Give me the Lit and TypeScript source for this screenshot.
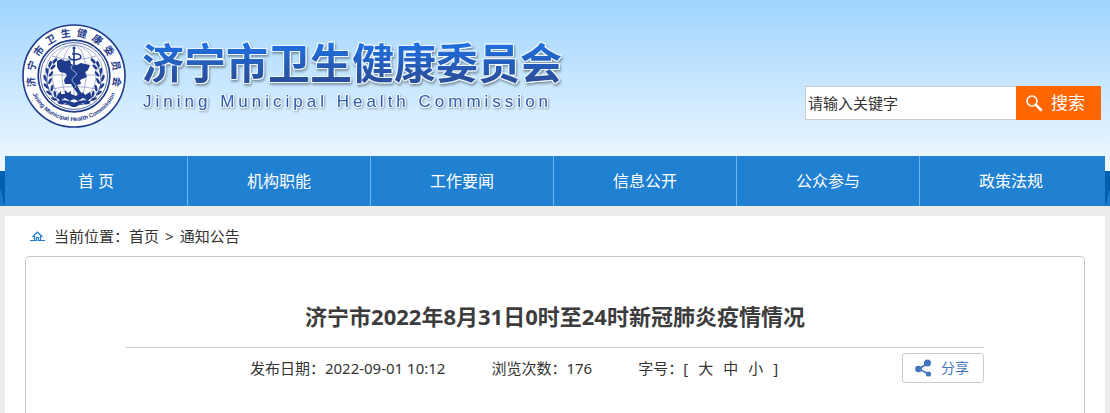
import { LitElement, html, svg, css } from "lit";
import { customElement, property } from "lit/decorators.js";

@customElement("site-emblem")
class SiteEmblem extends LitElement {
  static styles = css`
    :host { display: block; flex: none; }
    svg { display: block; }
    .cn { font: bold 10px "Noto Sans CJK SC", sans-serif; letter-spacing: 5px; }
    .en { font: bold 6px "Liberation Sans", sans-serif; }
  `;

  leaf(x: number, y: number, angle: number) {
    return svg`<ellipse cx=${x} cy=${y} rx="3.3" ry="1.3" transform="rotate(${angle} ${x} ${y})" />`;
  }

  branch() {
    return svg`
      <path d="M-4 29C-18 28-27 18-27 4C-27-5-24-12-19-17" fill="none" stroke="#1f3b8c" stroke-width=".8" />
      ${[[-19, -15, -50], [-24, -12, -70], [-21, -9, -45], [-27, -5, -95], [-23, -2, -55], [-29, 2, -110],
         [-24, 5, -65], [-28, 10, -130], [-22, 12, -80], [-25, 17, -145], [-19, 18, -100], [-20, 23, -160],
         [-14, 23, -120], [-13, 27, 190]].map(([x, y, a]) => this.leaf(x, y, a))}`;
  }

  render() {
    return html`
      <svg width="104" height="104" viewBox="-52 -52 104 104" role="img" aria-label="济宁市卫生健康委员会徽标">
        <defs>
          <path id="upper" d="M-14.5 36.7A39.5 39.5 0 1 1 14.5 36.7" />
          <path id="lower" d="M-45 0A45 45 0 0 0 45 0" />
        </defs>
        <circle r="51" fill="#fff" stroke="#1f3b8c" stroke-width="1.6" />
        <circle r="35.8" fill="none" stroke="#1f3b8c" stroke-width="1.7" />
        <circle r="33.4" fill="none" stroke="#1f3b8c" stroke-width=".8" />
        <g fill="none" stroke="#8493c2" stroke-width=".7">
          <circle r="29" cy="-2" />
          <ellipse rx="12" ry="29" cy="-2" />
          <ellipse rx="22" ry="29" cy="-2" />
          <path d="M-29-1H29M-22-20Q0-13 22-20M-22 13Q0 8 22 13M0-31V24" />
        </g>
        <g fill="#1f3b8c">
          ${this.branch()}
          <g transform="scale(-1 1)">${this.branch()}</g>
          <path d="M-17-15L-13-17L-9-15L-4-16L-3-12L3-11L7-13L11-12L16-11L14-6L11-4L13 1L6 4L7 8L3 9L6 15L9 19L6 22L3 17L-1 11L-3 8L-9 8L-10 4L-7-1L-9-3L-14-4L-17-9Z" />
          <path d="M-16 18L-13 15V18H-9V14L-6 17L-3 15V18L2 20L6 16V19L9 16L11 19L16 16L18 22L13 24L9 22L4 25L0 23L-4 25L-9 22L-13 24L-18 22Z" />
          <path d="M-17 26Q-9 22 0 27Q9 22 17 26Q8 26 2 31H-2Q-8 26-17 26Z" />
          <circle cx="0" cy="-28" r="1.6" />
        </g>
        <path d="M0-28V12" stroke="#1f3b8c" stroke-width="1.6" />
        <path d="M-5-20Q-5-16 1-16Q9-17 6-21Q3-23-2-22" fill="none" stroke="#1f3b8c" stroke-width="1.5" />
        <path d="M0-12Q-6-8 0-5Q5-2 0 1Q-4 4 0 7Q3 10 1 12" fill="none" stroke="#a9b9e0" stroke-width=".9" />
        <text class="cn" fill="#1f3b8c" text-anchor="middle"><textPath href="#upper" startOffset="51%">济宁市卫生健康委员会</textPath></text>
        <text class="en" fill="#1f3b8c" text-anchor="middle"><textPath href="#lower" startOffset="50%">Jining Municipal Health Commission</textPath></text>
      </svg>`;
  }
}

@customElement("app-root")
class AppRoot extends LitElement {
  @property({ type: Array }) sections = ["首 页", "机构职能", "工作要闻", "信息公开", "公众参与", "政策法规"];

  static styles = css`
    :host {
      display: flex; flex-direction: column; height: 100vh; overflow: hidden;
      background: #ededed; color: #333;
      font: 15px/20px "Noto Sans", "Noto Sans CJK SC", sans-serif;
    }
    * { box-sizing: border-box; }
    h1, h2, p { margin: 0; }
    a { color: inherit; text-decoration: none; }
    button { font: inherit; cursor: pointer; }

    .top {
      flex: none;
      background:
        linear-gradient(to bottom left, transparent 50%, #1a76c8 50%) 0 100% / 5px 18px no-repeat,
        linear-gradient(to bottom right, transparent 50%, #1a76c8 50%) 100% 100% / 5px 18px no-repeat,
        linear-gradient(#a0d5ff, #f1f9ff) 0 0 / 100% 171px no-repeat #0060b0;
    }
    .banner { display: flex; height: 156px; padding: 0 9px 0 22px; }
    .brand { display: flex; flex: 1; gap: 16px; padding-top: 24px; }
    .names { display: flex; flex-direction: column; gap: 6px; padding-top: 14px; white-space: nowrap; }
    .cn-name {
      font: 700 42px/46px "Noto Sans CJK SC", sans-serif;
      color: transparent; background: linear-gradient(#1f6fdf 15%, #2a4f9c 90%);
      -webkit-background-clip: text; background-clip: text;
      filter: drop-shadow(1px 0 #eef7ff) drop-shadow(-1px 0 #eef7ff) drop-shadow(0 1px #eef7ff) drop-shadow(0 -1px #eef7ff) drop-shadow(1px 2px 1px #0005);
    }
    .en-name {
      padding-left: 1px;
      font: 17px/24px "Liberation Sans", sans-serif; letter-spacing: 4px; color: #2f5cab;
      filter: drop-shadow(1px 0 #eef7ff) drop-shadow(-1px 0 #eef7ff) drop-shadow(0 1px #eef7ff) drop-shadow(0 -1px #eef7ff) drop-shadow(1px 1px 1px #0004);
    }
    .search { display: flex; height: 34px; margin-top: 86px; }
    .search input {
      width: 211px; padding: 0 2px; border: 1px solid #ccc; border-right: 0; border-radius: 0;
      background: #fff; font: inherit; color: #333; outline: 0;
    }
    .search input::placeholder { color: #333; opacity: 1; }
    .search button {
      display: flex; align-items: center; gap: 8px; width: 85px; padding: 0 0 0 9px;
      border: 0; background: #f60; color: #fff; font-size: 17px;
    }
    nav {
      display: grid; grid-template-columns: repeat(6, 1fr); height: 50px; margin: 0 5px; padding-right: 2px;
      background: #2080d2;
    }
    nav a { border-right: 1px solid #6cb4f2; color: #fff; font-size: 16px; line-height: 50px; text-align: center; }
    nav a:last-child { border-color: transparent; }

    main { display: flex; flex-direction: column; flex: 1; margin: 10px 5px 0; padding: 0 20px; background: #fff; }
    .crumbs { display: flex; align-items: center; height: 40px; padding-left: 5px; }
    .crumbs svg { margin-right: 9px; }
    .crumbs .sep { margin: 0 6px; }
    .panel { flex: 1; padding: 0 100px; border: 1px solid #c8c8c8; border-bottom: 0; border-radius: 5px 5px 0 0; }
    .title { padding: 42px 0 14px; border-bottom: 1px solid #ccc; font-size: 22px; line-height: 34px; text-align: center; color: #3c3c3c; }
    .meta { display: flex; align-items: center; padding-top: 5px; }
    .facts { display: flex; flex: 1; justify-content: center; gap: 46px; }
    .sizes { display: flex; gap: 10px; }
    .size { padding: 0; border: 0; background: none; color: inherit; }
    .share {
      display: flex; align-items: center; gap: 9px; width: 82px; height: 30px; padding: 0 0 0 12px;
      border: 1px solid #ccc; border-radius: 3px; background: #fff; color: #3f74c1; font-size: 14px;
    }
  `;

  render() {
    return html`
      <header class="top">
        <div class="banner">
          <div class="brand">
            <site-emblem></site-emblem>
            <div class="names">
              <h1 class="cn-name">济宁市卫生健康委员会</h1>
              <p class="en-name">Jining Municipal Health Commission</p>
            </div>
          </div>
          <form class="search" @submit=${(e: Event) => e.preventDefault()}>
            <input type="text" aria-label="请输入关键字" placeholder="请输入关键字" />
            <button>
              <svg width="18" height="18" viewBox="0 0 18 18" fill="none" stroke="#fff">
                <circle cx="7" cy="7" r="5" stroke-width="1.6" />
                <path d="M11 11L16 16" stroke-width="2.6" stroke-linecap="round" />
              </svg>搜索
            </button>
          </form>
        </div>
        <nav>${this.sections.map((name) => html`<a href="#">${name}</a>`)}</nav>
      </header>
      <main>
        <div class="crumbs">
          <svg width="15" height="11" viewBox="0 0 15 11" fill="none" stroke="#1c7bd0" stroke-width="1.2">
            <path d="M2.5 6L7.5 1L12.5 6M4.5 5V9.5M10.5 5V9.5M0 9.5H6.5V6.5H8.5V9.5H15" />
          </svg>
          <span>当前位置：</span><a href="#">首页</a><span class="sep">&gt;</span><a href="#">通知公告</a>
        </div>
        <article class="panel">
          <h2 class="title">济宁市2022年8月31日0时至24时新冠肺炎疫情情况</h2>
          <div class="meta">
            <div class="facts">
              <span>发布日期：2022-09-01 10:12</span>
              <span>浏览次数：176</span>
              <div class="sizes">
                <span>字号：[</span>
                <button class="size">大</button><button class="size">中</button><button class="size">小</button>
                <span>]</span>
              </div>
            </div>
            <button class="share">
              <svg width="17" height="18" viewBox="0 0 17 18" fill="#3f74c1" stroke="#3f74c1">
                <path d="M13 4L4 10L13.5 15" fill="none" stroke-width="1.6" />
                <circle cx="12.5" cy="4" r="3.5" stroke="none" />
                <circle cx="3.5" cy="10" r="3.3" stroke="none" />
                <circle cx="13.5" cy="15" r="2.6" stroke="none" />
              </svg>分享
            </button>
          </div>
        </article>
      </main>`;
  }
}
